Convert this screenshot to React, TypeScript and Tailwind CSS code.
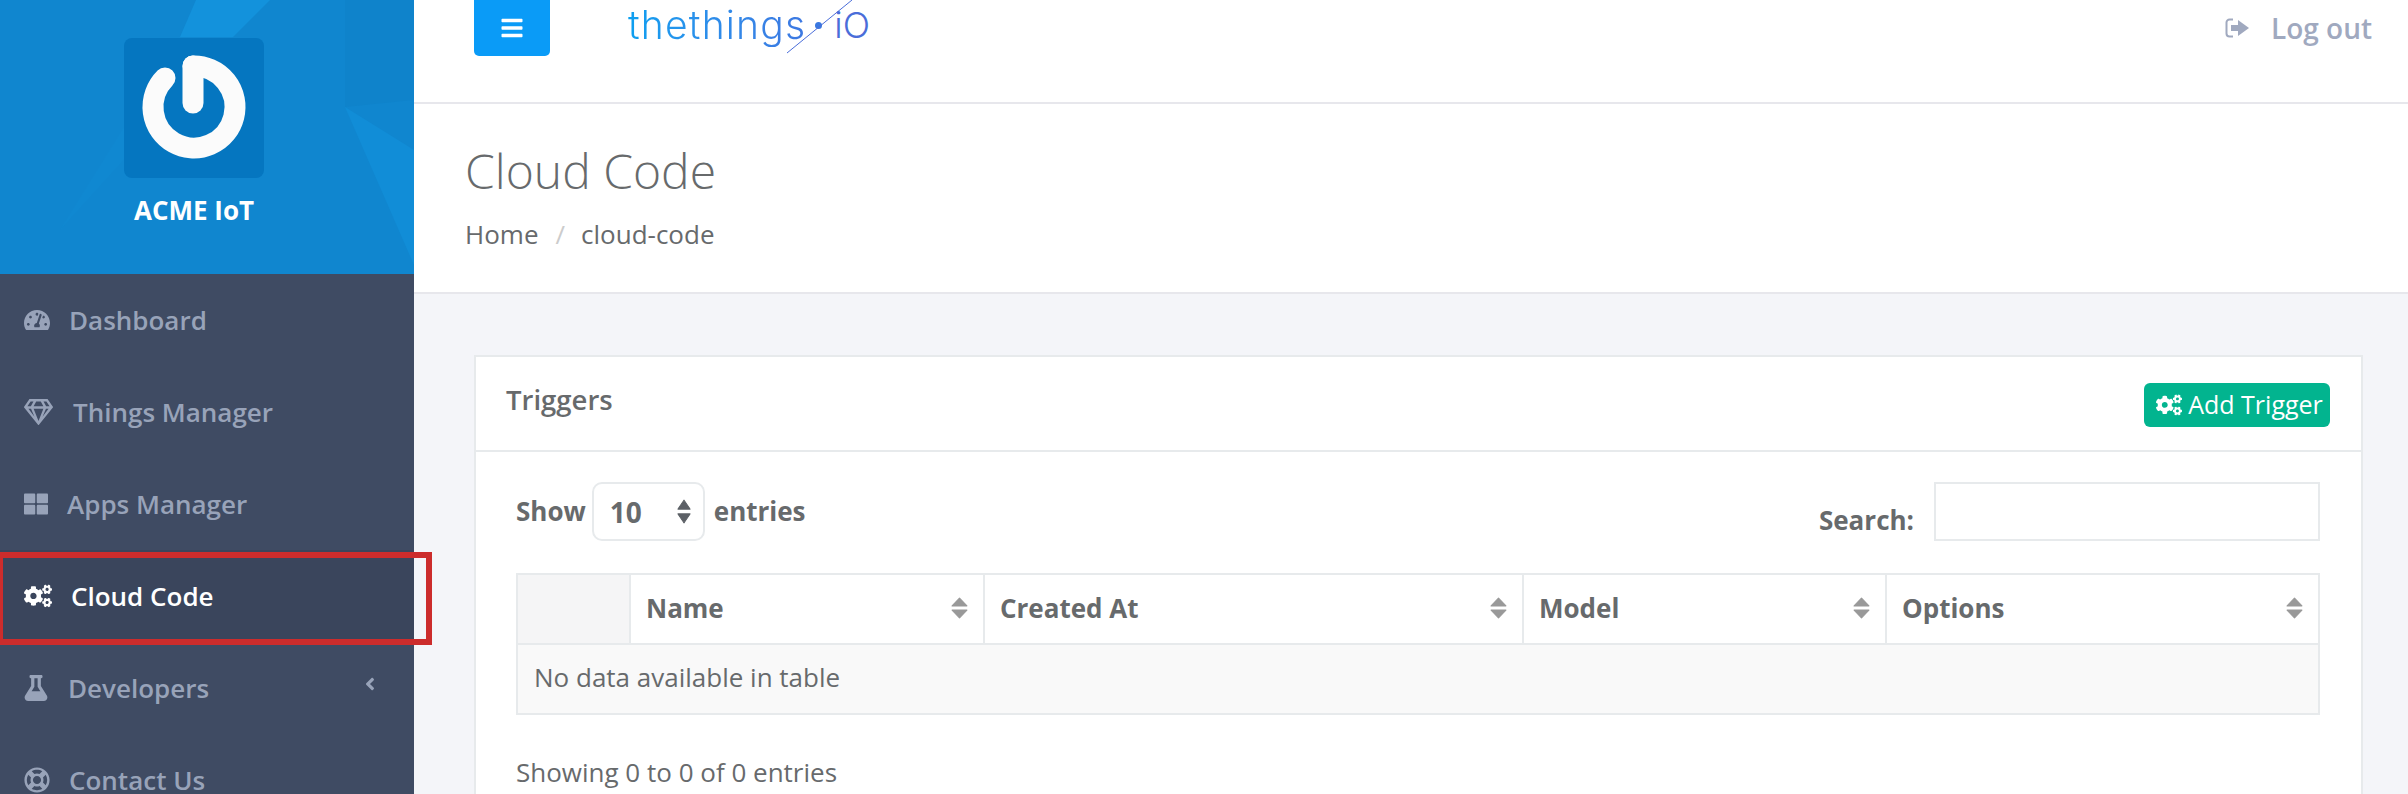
import type { ReactNode } from "react";
import { FaAngleLeft, FaBars, FaCogs, FaFlask, FaRegGem, FaRegLifeRing, FaTachometerAlt, FaThLarge } from "react-icons/fa";

function NavItem({ icon, label, textClass, active, children }: { icon: ReactNode; label: string; textClass: string; active?: boolean; children?: ReactNode }) {
  return (
    <div className={`flex h-[92px] items-center pl-[24px] text-[26px] font-semibold ${active ? "bg-[#3a455c] text-white" : "text-[#98a3b9]"}`}>
      {icon}
      <span className={textClass}>{label}</span>
      {children}
    </div>
  );
}

function SortIcon({ className }: { className: string }) {
  return (
    <svg viewBox="0 0 16 21" preserveAspectRatio="none" className={className} fill="currentColor" stroke="currentColor" strokeWidth="1" strokeLinejoin="round" aria-hidden="true">
      <polygon points="8,1 15,8.5 1,8.5" />
      <polygon points="1,12.5 15,12.5 8,20" />
    </svg>
  );
}

function Logo() {
  return (
    <div className="flex h-[140px] w-[140px] items-center justify-center rounded-lg bg-[#0576c0]">
      <svg viewBox="0 0 140 140" className="h-[140px] w-[140px]" aria-hidden="true">
        <path d="M69 28 A41 41 0 1 1 41 40" fill="none" stroke="#fbfbfb" strokeWidth="21" strokeLinecap="round" />
        <path d="M69 28 L69 65" fill="none" stroke="#fbfbfb" strokeWidth="21" strokeLinecap="round" />
      </svg>
    </div>
  );
}

function Sidebar() {
  return (
    <aside className="w-[414px] shrink-0 bg-[#3f4b63]">
      <div className="relative flex h-[274px] flex-col items-center bg-[#1086cf] pr-[26px] pt-[38px]">
        <svg viewBox="0 0 414 274" className="absolute inset-0 h-[274px] w-[414px]" aria-hidden="true">
          <polygon points="196,0 270,0 233,37 180,37" fill="#1392dc" />
          <polygon points="180,37 233,37 160,120 60,230" fill="#1088d1" />
          <polygon points="345,107 414,150 414,265" fill="#118dd7" />
          <polygon points="345,0 414,0 414,100 345,107" fill="#0f83cb" />
        </svg>
        <div className="relative">
          <Logo />
        </div>
        <div className="relative mt-[13px] text-[26px] font-bold leading-[38px] text-white">ACME IoT</div>
      </div>
      <NavItem icon={<FaTachometerAlt className="h-[26px] w-[26px]" />} label="Dashboard" textClass="ml-[19px]" />
      <NavItem icon={<FaRegGem className="h-[26px] w-[29px]" />} label="Things Manager" textClass="ml-[20px]" />
      <NavItem icon={<FaThLarge className="h-[24px] w-[24px]" />} label="Apps Manager" textClass="ml-[19px]" />
      <NavItem active icon={<FaCogs className="h-[26px] w-[28px]" />} label="Cloud Code" textClass="ml-[19px]" />
      <NavItem icon={<FaFlask className="h-[26px] w-[24px]" />} label="Developers" textClass="ml-[20px]">
        <FaAngleLeft className="ml-auto mr-[36px] mb-[8px] h-[20px] w-[16px]" />
      </NavItem>
      <NavItem icon={<FaRegLifeRing className="h-[26px] w-[26px]" />} label="Contact Us" textClass="ml-[19px]" />
    </aside>
  );
}

function TopBar() {
  return (
    <div className="flex h-[104px] shrink-0 items-start justify-between border-b-2 border-[#e7e7ec] bg-white pl-[60px] pr-[36px]">
      <div className="flex items-start">
        <div className="flex h-[56px] w-[76px] items-center justify-center rounded-b-[5px] bg-[#0a9bf7] text-white">
          <FaBars className="h-[24px] w-[24px]" />
        </div>
        <div className="relative ml-[78px] flex items-center pt-[3px] font-['Inter',sans-serif] text-[39px] font-light leading-[44px]">
          <span className="bg-linear-to-r from-[#0a9ff0] to-[#3d78e2] bg-clip-text tracking-[1.2px] text-transparent">thethings</span>
          <span className="ml-[9px] h-[7px] w-[7px] rounded-full bg-[#3a78e0]" />
          <span className="ml-[12px] text-[36px] text-[#4a6dd9]">iO</span>
          <svg viewBox="0 0 70 54" className="absolute left-[158px] top-0 h-[54px] w-[70px]" aria-hidden="true">
            <line x1="1" y1="53" x2="66" y2="0" stroke="#4a6dd9" strokeWidth="1" />
          </svg>
        </div>
      </div>
      <div className="flex items-center pt-[6px] text-[28px] font-semibold leading-[44px] text-[#a0a9bf]">
        <svg viewBox="0 0 24 20" className="h-[20px] w-[24px]" aria-hidden="true">
          <path d="M8 1.5H4.5a3 3 0 0 0-3 3v11a3 3 0 0 0 3 3H8" fill="none" stroke="currentColor" strokeWidth="2" />
          <polygon points="6,7 13,7 13,2 24,10 13,18 13,13 6,13" fill="currentColor" />
        </svg>
        <span className="ml-[22px]">Log out</span>
      </div>
    </div>
  );
}

function PageHeading() {
  return (
    <div className="h-[190px] shrink-0 border-b-2 border-[#e7e7ec] bg-white pl-[51px] pt-[35px] text-[#676a6c]">
      <h1 className="text-[48px] font-light leading-[64px]">Cloud Code</h1>
      <div className="mt-[13px] flex text-[26px] leading-[36px]">
        <span>Home</span>
        <span className="ml-[17px] text-[#ccc]">/</span>
        <span className="ml-[16px]">cloud-code</span>
      </div>
    </div>
  );
}

const columns = ["Name", "Created At", "Model", "Options"];

function TriggersTable() {
  return (
    <table className="mt-[32px] w-full table-fixed border-collapse text-[26px] text-[#676a6c]">
      <colgroup>
        <col className="w-[113px]" />
        <col className="w-[354px]" />
        <col className="w-[539px]" />
        <col className="w-[363px]" />
        <col className="w-[433px]" />
      </colgroup>
      <thead>
        <tr className="h-[70px]">
          <th className="border-2 border-[#e7eaec] bg-[#f5f5f6]" />
          {columns.map((col) => (
            <th key={col} className="border-2 border-[#e7eaec] pb-[2px] pl-[15px] pr-[15px] text-left font-bold">
              <div className="flex items-center justify-between">
                <span>{col}</span>
                <SortIcon className="h-[22px] w-[17px] text-[#999]" />
              </div>
            </th>
          ))}
        </tr>
      </thead>
      <tbody>
        <tr className="h-[70px] bg-[#f9f9f9]">
          <td colSpan={5} className="border-2 border-[#e7eaec] pb-[3px] pl-[16px]">No data available in table</td>
        </tr>
      </tbody>
    </table>
  );
}

function TriggersPanel() {
  return (
    <div className="flex-1 border-2 border-b-0 border-[#e7eaec] bg-white">
      <div className="flex h-[95px] items-center justify-between border-b-2 border-[#e7eaec] pl-[30px] pr-[31px]">
        <div className="pb-[8px] text-[27.5px] font-semibold text-[#676a6c]">Triggers</div>
        <button className="mt-[3px] flex h-[44px] w-[186px] items-center justify-center gap-[6px] rounded-[6px] bg-[#02b48f] pl-[5px] text-[25px] text-white">
          <FaCogs className="h-[24px] w-[26px]" />
          Add Trigger
        </button>
      </div>
      <div className="pl-[40px] pr-[41px] pt-[30px] text-[26px] text-[#676a6c]">
        <div className="flex h-[59px] justify-between">
          <div className="flex items-center font-bold">
            <span>Show</span>
            <div className="ml-[6px] flex h-[59px] w-[113px] items-center justify-between rounded-[10px] border-2 border-[#e7eaec] pl-[16px] pr-[12px]">
              <span className="text-[28px] font-bold">10</span>
              <SortIcon className="h-[25px] w-[14px] text-[#5c6066]" />
            </div>
            <span className="ml-[9px]">entries</span>
          </div>
          <div className="flex items-center font-bold">
            <span className="mt-[18px]">Search:</span>
            <div className="ml-[20px] h-[59px] w-[386px] border-2 border-[#e7eaec] bg-white" />
          </div>
        </div>
        <TriggersTable />
        <div className="mt-[39px] leading-[36px]">Showing 0 to 0 of 0 entries</div>
      </div>
    </div>
  );
}

export default function App() {
  return (
    <div className="relative flex h-[794px] w-[2408px] overflow-hidden bg-[#f4f5f9] font-['Open_Sans',sans-serif]">
      <Sidebar />
      <main className="flex min-w-0 flex-1 flex-col">
        <TopBar />
        <PageHeading />
        <div className="flex flex-1 pl-[60px] pr-[47px] pt-[61px]">
          <TriggersPanel />
        </div>
      </main>
      {/* annotation drawn over the Cloud Code item */}
      <div className="absolute left-[-3px] top-[552px] h-[93px] w-[435px] border-[6px] border-[#cc2c2c]" />
    </div>
  );
}
